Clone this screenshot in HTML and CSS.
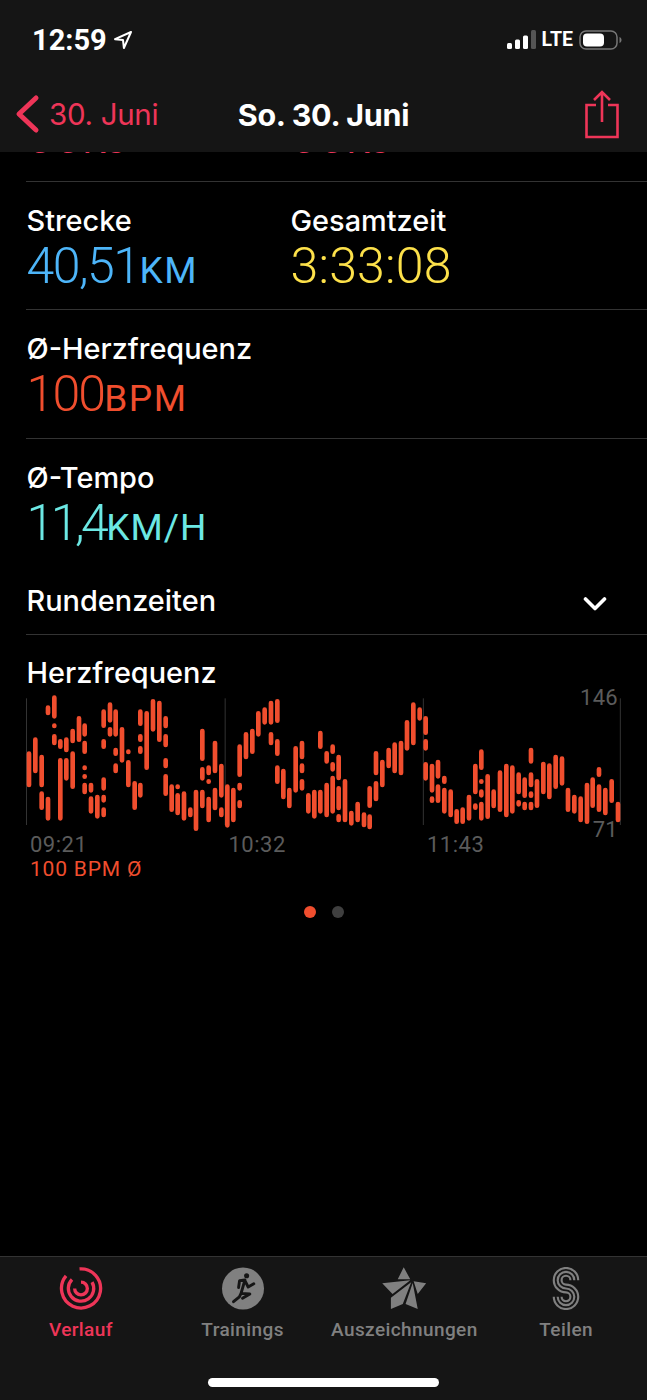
FILE: index.html
```html
<!DOCTYPE html>
<html lang="de">
<head>
<meta charset="utf-8">
<title>So. 30. Juni</title>
<link rel="stylesheet" href="styles.css">
</head>
<body>
<div class="screen">
  <header class="top">
    <div class="status">
      <div class="status-left">
        <span class="clock">12:59</span>
        <svg class="loc" width="20" height="20" viewBox="0 0 20 20"><path d="M18 2 2 9.2l8 .9.9 7.9z" fill="none" stroke="#fff" stroke-width="2" stroke-linejoin="round"/></svg>
      </div>
      <div class="status-right">
        <svg width="29" height="20" viewBox="0 0 29 20"><rect x="0" y="13" width="5" height="6" rx="1.5" fill="#fff"/><rect x="8" y="9.5" width="5" height="9.5" rx="1.5" fill="#fff"/><rect x="16" y="5.5" width="5" height="13.5" rx="1.5" fill="#fff"/><rect x="24" y="0" width="5" height="19" rx="1.5" fill="#555"/></svg>
        <span class="lte">LTE</span>
        <svg width="43" height="20" viewBox="0 0 43 20"><rect x="1" y="1" width="37" height="18" rx="6" fill="none" stroke="#777" stroke-width="1.5"/><rect x="4" y="3.5" width="21" height="13" rx="4" fill="#fff"/><path d="M40.5 7c1.4.5 2 1.6 2 3s-.6 2.500-2 3z" fill="#777"/></svg>
      </div>
    </div>
    <nav class="nav">
      <div class="back">
        <svg width="26" height="40" viewBox="0 0 26 40"><path d="M22 4 5 20l17 16" fill="none" stroke="#ee3558" stroke-width="5" stroke-linecap="round" stroke-linejoin="round"/></svg>
        <span>30. Juni</span>
      </div>
      <div class="title">So. 30. Juni</div>
      <div class="share">
        <svg width="36" height="50" viewBox="0 0 36 50"><path d="M12 16H2.500v32h31V16H24M18 33V3M10 11l8-8 8 8" fill="none" stroke="#ee3558" stroke-width="2.600"/></svg>
      </div>
    </nav>
  </header>

  <main class="content">
    <section class="row row-clipped">
      <div class="metric"><div class="value pink">00<span class="unit">KJ</span></div></div>
      <div class="metric"><div class="value pink">00<span class="unit">KJ</span></div></div>
    </section>
    <section class="row row-short">
      <div class="metric"><div class="label">Strecke</div><div class="value blue"><span class="tight-s">40,51</span><span class="unit">KM</span></div></div>
      <div class="metric"><div class="label">Gesamtzeit</div><div class="value yellow">3:33:08</div></div>
    </section>
    <section class="row">
      <div class="metric"><div class="label">Ø-Herzfrequenz</div><div class="value orange"><span class="tight-m">100</span><span class="unit">BPM</span></div></div>
    </section>
    <section class="row row-open">
      <div class="metric"><div class="label">Ø-Tempo</div><div class="value cyan"><span class="tight">11,4</span><span class="unit unit-tight">KM/H</span></div></div>
    </section>
    <section class="laps">
      <span class="label">Rundenzeiten</span>
      <svg class="laps-chev" width="24" height="16" viewBox="0 0 24 16"><path d="M2.500 3 12 12.500 21.500 3" fill="none" stroke="#fff" stroke-width="3.600" stroke-linecap="round" stroke-linejoin="round"/></svg>
    </section>
    <section class="heart">
      <h2 class="label">Herzfrequenz</h2>
      <div class="chart">
        <svg class="plot" width="647" height="140" viewBox="0 45 1941 420">
          <path class="grid" d="M79.500 55V435M675.500 55V435M1270 55V435M1861 55V435"/>
          <path class="bars" d="M87 221V315M106 179V273M125 231V315M125 341V383M144 357V415M144 83V99M163 53V109M163 137V138M163 169V189M181 184V200M181 241V415M199 179V210M199 241V295M218 153V183M218 221V320M237 115V179M254 137V163M254 189V215M254 263V264M254 289V290M254 315V336M273 315V331M273 356V394M292 351V409M311 95V137M311 184V200M311 299V325M311 351V361M311 389V405M330 74V121M330 148V163M347 95V163M347 210V221M347 257V273M366 148V241M385 215V216M385 247V315M404 310V383M421 95V131M421 169V179M421 205V215M421 315V346M440 100V263M459 64V148M478 69V179M497 115V138M497 169V195M497 241V258M497 289V341M515 320V389M533 320V321M533 346V399M552 341V415M571 389V405M588 336V446M607 153V236M607 268V295M607 336V378M626 263V279M626 304V305M626 357V420M645 189V273M645 330V384M664 258V346M664 389V405M682 320V436M700 330V420M719 200V284M719 315V325M719 367V378M738 163V231M757 153V215M775 100V163M794 89V127M813 69V127M813 163V189M832 64V122M832 184V221M832 263V305M850 273V351M868 330V378M887 205V331M906 189V231M906 257V273M906 304V325M925 346V394M943 336V409M961 159V200M961 336V394M980 220V244M980 315V405M998 200V215M998 253V268M998 294V394M1016 231V294M1016 325V384M1016 409V420M1035 304V420M1054 399V430M1073 372V420M1092 404V435M1109 325V377M1109 410V441M1128 220V279M1128 310V357M1147 246V315M1166 210V258M1184 194V273M1203 189V279M1221 127V205M1240 74V189M1259 89V115M1277 115V158M1277 184V205M1277 253V295M1296 258V331M1296 356V362M1314 246V289M1314 320V362M1333 294V305M1333 330V394M1352 335V405M1370 394V425M1388 389V425M1407 351V415M1426 258V336M1426 377V383M1444 215V263M1444 304V305M1444 335V346M1444 372V415M1463 289V410M1481 335V378M1500 278V389M1519 258V405M1537 263V394M1556 284V336M1556 367V373M1574 299V347M1574 372V384M1593 210V244M1593 284V315M1593 341V347M1593 372V384M1611 304V377M1630 252V336M1648 257V351M1667 231V320M1686 236V310M1704 330V389M1723 351V394M1742 356V420M1761 315V425M1778 299V377M1797 268V284M1797 320V389M1816 330V399M1835 304V362M1854 372V420"/>
        </svg>
        <span class="y-label y-max">146</span>
        <span class="y-label y-min">71</span>
      </div>
      <div class="axis"><span>09:21</span><span>10:32</span><span>11:43</span></div>
      <div class="avg">100 BPM Ø</div>
    </section>
    <div class="pager"><span class="dot dot-on"></span><span class="dot"></span></div>
  </main>

  <footer class="tabbar">
    <div class="tabs">
      <div class="tab tab-on">
        <svg width="44" height="44" viewBox="0 0 44 44" fill="none" stroke="#ee3558" stroke-width="3.400"><path d="M20.500 2A20 20 0 1 1 6.700 9.100"/><path d="M12.800 12.800A13 13 0 1 0 33.300 15.500"/><path d="M22 15.500A6.500 6.500 0 1 1 15.500 22"/></svg>
        <span>Verlauf</span>
      </div>
      <div class="tab">
        <svg width="44" height="44" viewBox="0 0 44 44"><circle cx="22" cy="22" r="21.500" fill="#808080"/><circle cx="25.700" cy="9" r="2.600" fill="#151515"/><path d="M17.500 21 18.500 14 24 13.200 20 27l9 .5-7.500 4.500M20 27l-1.700 3.500-6 5M24 14l3.300 6.500 5.700-3.300" fill="none" stroke="#151515" stroke-width="3" stroke-linecap="round" stroke-linejoin="round"/></svg>
        <span>Trainings</span>
      </div>
      <div class="tab">
        <svg width="48" height="46" viewBox="0 0 48 46" fill="#808080"><path d="M23.700.3 30.700 13H17.300zM34.300 15.300l13.400 2L38.700 29zM.7 17.300l30-3L11.700 29zM31.700 16.300 10 33v12l12.700-5.300zM33.300 17l5.400 28-13-5.300z"/></svg>
        <span>Auszeichnungen</span>
      </div>
      <div class="tab">
        <svg width="28" height="44" viewBox="0 0 28 44" fill="none" stroke="#808080" stroke-width="2.200"><path d="M26.500 13.500A12.500 12.500 0 1 0 14 26a4.500 4.500 0 1 1-4.500 4.500"/><path d="M22.500 13.500A8.500 8.500 0 1 0 14 22a8.500 8.500 0 1 1-8.500 8.500"/><path d="M18.500 13.500A4.500 4.500 0 1 0 14 18a12.500 12.500 0 1 1-12.500 12.500"/></svg>
        <span>Teilen</span>
      </div>
    </div>
    <div class="home"></div>
  </footer>
</div>
</body>
</html>
```
FILE: styles.css
```css
* { box-sizing: border-box; }
html, body { margin: 0; padding: 0; background: #000; }
body { font-family: Roboto, "Liberation Sans", sans-serif; color: #fff; }

.screen { width: 647px; height: 1400px; display: flex; flex-direction: column; overflow: hidden; background: #000; }

.top { height: 152px; flex: none; background: #151515; position: relative; z-index: 1; }
.status { height: 78px; padding: 2px 25px 0 32px; display: flex; justify-content: space-between; align-items: center; }
.status-left { display: flex; align-items: center; gap: 6px; }
.clock { font-size: 29px; font-weight: 700; line-height: 32px; }
.status-right { display: flex; align-items: center; gap: 6px; }
.lte { font-size: 19.500px; font-weight: 700; line-height: 24px; }

.nav { height: 72px; display: grid; grid-template-columns: 1fr auto 1fr; align-items: center; padding: 0 14px; }
.back { display: flex; align-items: center; gap: 9px; color: #ee3558; font-family: Inter, Roboto, sans-serif; font-size: 29.500px; letter-spacing: -0.3px; }
.title { font-family: Inter, Roboto, sans-serif; font-size: 30.500px; font-weight: 700; letter-spacing: -0.3px; }
.share { justify-self: end; display: flex; height: 50px; margin-right: 13px; }

.content { flex: 1; min-height: 0; overflow: hidden; }
.row { display: flex; margin-left: 26px; padding: 22px 0 16px 0; border-bottom: 1px solid #333; }
.row-clipped { margin-top: -66px; padding-bottom: 17px; }
.row-short { padding-bottom: 15px; }
.row-open { border-bottom: 0; padding-bottom: 17px; }
.metric { width: 264px; padding-left: 0.500px; }
.label { font-family: Inter, Roboto, sans-serif; font-size: 28.900px; line-height: 34px; font-weight: 500; margin: 0; }
.value { font-size: 50px; line-height: 56px; height: 56px; font-weight: 350; letter-spacing: 0.2px; white-space: nowrap; }
.unit { font-size: 37px; line-height: 1; font-weight: 400; letter-spacing: 1.500px; }
.unit-tight { letter-spacing: 1px; }
.tight { letter-spacing: -3.500px; margin-right: 1px; }
.tight-s { letter-spacing: -1.500px; }
.tight-m { letter-spacing: -1.800px; }
.pink { color: #ee3558; }
.blue { color: #4db5f9; }
.yellow { color: #fde14a; }
.orange { color: #f04e2e; }
.cyan { color: #6ce8e4; }

.laps { height: 67px; margin-left: 26px; padding: 16px 40px 0 0.500px; border-bottom: 1px solid #333; display: flex; justify-content: space-between; align-items: flex-start; }
.laps-chev { margin-top: 12px; }

.heart { padding-top: 21px; }
.heart .label { padding-left: 26.500px; }
.chart { position: relative; height: 140px; margin-top: 5px; }
.plot { display: block; }
.grid { stroke: #333; stroke-width: 3; fill: none; }
.bars { stroke: #f04e2e; stroke-width: 14; stroke-linecap: round; fill: none; }
.y-label { position: absolute; right: 29px; color: #5b5b5b; font-size: 22px; line-height: 24px; letter-spacing: 0.3px; }
.y-max { top: -9px; }
.y-min { top: 123px; }
.axis { display: grid; grid-template-columns: repeat(3, 198.500px); padding-left: 30px; margin-top: -2px; color: #5b5b5b; font-size: 22px; line-height: 23px; letter-spacing: 0.5px; }
.avg { padding-left: 30px; color: #f04e2e; font-size: 21px; line-height: 26px; letter-spacing: 0.8px; }
.pager { display: flex; justify-content: center; gap: 16px; margin-top: 24px; }
.dot { width: 12px; height: 12px; border-radius: 50%; background: #3f3f3f; }
.dot-on { background: #f04e2e; }

.tabbar { height: 144px; flex: none; background: #151515; border-top: 1px solid #333; padding-top: 10px; display: flex; flex-direction: column; align-items: center; }
.tabs { width: 100%; display: grid; grid-template-columns: repeat(4, 1fr); }
.tab { display: flex; flex-direction: column; align-items: center; gap: 8px; height: 75px; color: #808080; font-size: 19px; font-weight: 500; letter-spacing: 0.4px; line-height: 24px; justify-content: flex-end; white-space: nowrap; }
.tab-on { color: #ee3558; }
.home { width: 231px; height: 9px; margin-top: 36px; background: #fff; border-radius: 5px; }
```
